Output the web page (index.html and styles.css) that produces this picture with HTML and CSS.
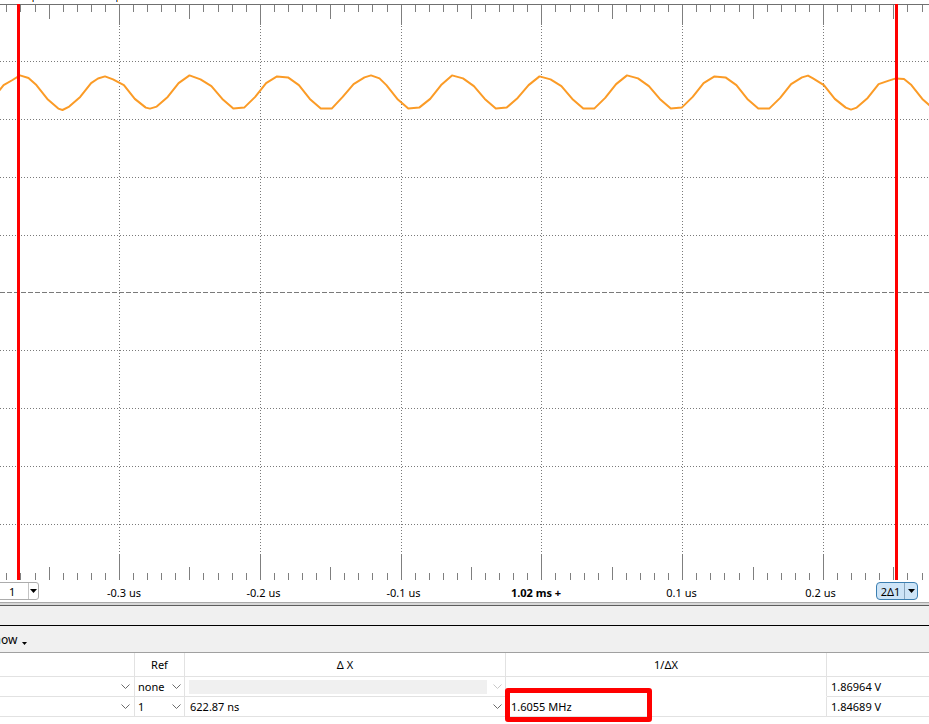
FILE: index.html
```html
<!DOCTYPE html>
<html>
<head>
<meta charset="utf-8">
<title>Scope</title>
<link rel="stylesheet" href="styles.css">
</head>
<body>
<div class="app">
  <div class="scope">
    <svg class="plot" width="929" height="580" viewBox="0 0 929 580" xmlns="http://www.w3.org/2000/svg">
      <rect x="32" y="0" width="1" height="2" fill="#f7a030"/>
      <rect x="33" y="0" width="1" height="2" fill="#3a7bd5"/>
      <rect x="116" y="0" width="1" height="2" fill="#3a7bd5"/>
      <rect x="117" y="0" width="1" height="2" fill="#f7a030"/>
      <rect x="0" y="4" width="929" height="1" fill="#707070"/>
      <g stroke="#7f7f7f" stroke-width="1" fill="none">
        <path d="M6.5 5v7M20.5 5v7M35.5 5v7M63.5 5v7M77.5 5v7M91.5 5v7M105.5 5v7M133.5 5v7M147.5 5v7M161.5 5v7M175.5 5v7M203.5 5v7M218.5 5v7M232.5 5v7M246.5 5v7M274.5 5v7M288.5 5v7M302.5 5v7M316.5 5v7M344.5 5v7M358.5 5v7M372.5 5v7M387.5 5v7M415.5 5v7M429.5 5v7M443.5 5v7M457.5 5v7M485.5 5v7M499.5 5v7M513.5 5v7M527.5 5v7M555.5 5v7M570.5 5v7M584.5 5v7M598.5 5v7M626.5 5v7M640.5 5v7M654.5 5v7M668.5 5v7M696.5 5v7M710.5 5v7M724.5 5v7M739.5 5v7M767.5 5v7M781.5 5v7M795.5 5v7M809.5 5v7M837.5 5v7M851.5 5v7M865.5 5v7M879.5 5v7M907.5 5v7M922.5 5v7"/>
        <path d="M49.5 5v14M189.5 5v14M330.5 5v14M471.5 5v14M612.5 5v14M753.5 5v14M893.5 5v14"/>
        <path d="M119.5 5v20M260.5 5v20M401.5 5v20M541.5 5v20M682.5 5v20M823.5 5v20"/>
        <path d="M6.5 573v7M20.5 573v7M35.5 573v7M63.5 573v7M77.5 573v7M91.5 573v7M105.5 573v7M133.5 573v7M147.5 573v7M161.5 573v7M175.5 573v7M203.5 573v7M218.5 573v7M232.5 573v7M246.5 573v7M274.5 573v7M288.5 573v7M302.5 573v7M316.5 573v7M344.5 573v7M358.5 573v7M372.5 573v7M387.5 573v7M415.5 573v7M429.5 573v7M443.5 573v7M457.5 573v7M485.5 573v7M499.5 573v7M513.5 573v7M527.5 573v7M555.5 573v7M570.5 573v7M584.5 573v7M598.5 573v7M626.5 573v7M640.5 573v7M654.5 573v7M668.5 573v7M696.5 573v7M710.5 573v7M724.5 573v7M739.5 573v7M767.5 573v7M781.5 573v7M795.5 573v7M809.5 573v7M837.5 573v7M851.5 573v7M865.5 573v7M879.5 573v7M907.5 573v7M922.5 573v7"/>
        <path d="M49.5 567v13M189.5 567v13M330.5 567v13M471.5 567v13M612.5 567v13M753.5 567v13M893.5 567v13"/>
        <path d="M119.5 555v25M260.5 555v25M401.5 555v25M541.5 555v25M682.5 555v25M823.5 555v25"/>
      </g>
      <g stroke="#7a7a7a" stroke-width="1" stroke-dasharray="1 2" fill="none">
        <path d="M119.5 26V555M260.5 26V555M401.5 26V555M541.5 26V555M682.5 26V555M823.5 26V555"/>
        <path d="M0 61.5H929M0 119.5H929M0 177.5H929M0 235.5H929M0 350.5H929M0 408.5H929M0 466.5H929M0 524.5H929"/>
      </g>
      <path d="M0 292.5H929" stroke="#7a7a7a" stroke-width="1" stroke-dasharray="5 2" fill="none"/>
      <polyline fill="none" stroke="#fb9b26" stroke-width="2" stroke-linejoin="round"
        points="-7.3,98.9 3.6,85.1 12.5,80 20,75.4 28.5,78 36.4,85.1 47.3,98.9 58.3,108.6 62.5,110 69.2,106.6 80.2,96.9 91.1,83.1 98,78.5 105,76.4 113.0,79.4 123.9,85.1 134.8,98.9 145.8,107.6 150,108.6 156.7,106.6 167.7,96.9 178.6,83.1 189.5,75.4 200.5,79.4 211.4,86.1 222.3,98.9 233.3,108.6 244.2,107.6 255.2,96.9 266.1,83.1 277.0,76.4 288.0,77.4 298.9,85.1 309.8,98.9 320.8,108.6 331.7,108.6 342.7,96.9 353.6,84.1 364.5,77.4 371,75.4 379.5,78.4 386.4,85.1 397.3,98.9 408.3,108.6 419.2,107.6 430.2,98.9 441.1,85.1 452.0,75.4 463.0,78.4 473.9,86.1 484.8,98.9 495.8,108.6 506.7,107.6 517.7,97.9 528.6,85.1 539.5,76.4 550.5,79.4 561.4,86.1 572.3,98.9 583.3,108.6 594.2,108.6 605.2,97.9 616.1,84.1 627.0,75.4 638.0,78.4 648.9,86.1 659.8,98.9 670.8,108.6 681.7,107.6 692.7,96.9 703.6,83.1 714.5,76.4 725.5,77.4 736.4,85.1 747.3,98.9 758.3,108.6 769.2,108.6 780.2,97.9 791.1,84.1 802.0,77.4 808,75.6 813.0,78.4 823.9,85.1 834.8,98.9 845.8,107.6 851,109.6 856.7,107.6 867.7,97.9 878.6,84.1 889.5,80.4 896,78.4 904,79 911.4,85.1 922.3,98.9 933.3,108.6"/>
      <rect x="17" y="4" width="3" height="577" fill="#ff0000"/>
      <rect x="895" y="4" width="3" height="577" fill="#ff0000"/>
    </svg>
  </div>

  <div class="axis">
    <div class="combo">
      <span class="cv">1</span>
      <span class="ca"><svg width="7" height="4" viewBox="0 0 7 4"><polygon points="0,0 7,0 3.5,4" fill="#000"/></svg></span>
    </div>
    <span class="lbl">-0.3 us</span>
    <span class="lbl">-0.2 us</span>
    <span class="lbl">-0.1 us</span>
    <span class="lbl bold">1.02 ms +</span>
    <span class="lbl">0.1 us</span>
    <span class="lbl">0.2 us</span>
    <div class="delta">
      <span class="dv">2Δ1</span>
      <span class="ca"><svg width="7" height="4" viewBox="0 0 7 4"><polygon points="0,0 7,0 3.5,4" fill="#000"/></svg></span>
    </div>
  </div>

  <div class="sep"></div>
  <div class="panel"></div>
  <div class="toolbar">
    <span class="show">Show</span>
    <svg class="caret" width="5" height="3" viewBox="0 0 5 3"><polygon points="0,0 5,0 2.5,3" fill="#000"/></svg>
  </div>

  <div class="meas">
    <div class="th"></div>
    <div class="th">Ref</div>
    <div class="th">Δ X</div>
    <div class="th">1/ΔX</div>
    <div class="th"></div>

    <div class="td dd c1"><span class="v"></span><svg class="chev" width="9" height="5" viewBox="0 0 9 5"><polyline points="0.5,0.5 4.5,4.5 8.5,0.5"/></svg></div>
    <div class="td dd c2"><span class="v">none</span><svg class="chev" width="9" height="5" viewBox="0 0 9 5"><polyline points="0.5,0.5 4.5,4.5 8.5,0.5"/></svg></div>
    <div class="td dd c3 dis"><span class="v off"></span><svg class="chev light" width="9" height="5" viewBox="0 0 9 5"><polyline points="0.5,0.5 4.5,4.5 8.5,0.5"/></svg></div>
    <div class="td c4 nob"></div>
    <div class="td num">1.86964 V</div>

    <div class="td dd c1"><span class="v"></span><svg class="chev" width="9" height="5" viewBox="0 0 9 5"><polyline points="0.5,0.5 4.5,4.5 8.5,0.5"/></svg></div>
    <div class="td dd c2"><span class="v">1</span><svg class="chev" width="9" height="5" viewBox="0 0 9 5"><polyline points="0.5,0.5 4.5,4.5 8.5,0.5"/></svg></div>
    <div class="td dd c3"><span class="v">622.87 ns</span><svg class="chev" width="9" height="5" viewBox="0 0 9 5"><polyline points="0.5,0.5 4.5,4.5 8.5,0.5"/></svg></div>
    <div class="td c4 hl"><span class="hv">1.6055 MHz</span><div class="mark"></div></div>
    <div class="td num">1.84689 V</div>
  </div>
</div>
</body>
</html>
```

FILE: styles.css
```css
* {
  box-sizing: border-box;
  margin: 0;
  padding: 0;
}

html, body {
  width: 929px;
  height: 724px;
  overflow: hidden;
  background: #fff;
}

body {
  font-family: "Noto Sans", "DejaVu Sans", sans-serif;
  font-size: 11px;
  color: #000;
  line-height: 13px;
}

.app {
  width: 929px;
  height: 724px;
  overflow: hidden;
}

.scope {
  height: 580px;
}

.plot {
  display: block;
}

/* time axis row */
.axis {
  height: 22px;
  display: grid;
  grid-template-columns: 54px 140px 139px 141px 124px 167px 111px 1fr;
  align-items: center;
}

.lbl {
  text-align: center;
  white-space: nowrap;
  padding-top: 2px;
}

.bold {
  font-weight: bold;
}

.combo {
  margin-left: -8px;
  width: 47px;
  height: 18px;
  border: 1px solid #acacac;
  border-radius: 3px;
  background: #fff;
  display: flex;
  align-items: center;
}

.cv {
  width: 36px;
  height: 16px;
  padding-left: 16px;
  border-right: 1px solid #c4c4c4;
  display: flex;
  align-items: center;
}

.ca {
  flex: 1;
  display: flex;
  align-items: center;
  justify-content: center;
}

.ca svg {
  display: block;
}

.delta {
  width: 42px;
  height: 18px;
  border: 1px solid #3c7fb1;
  border-radius: 4px;
  background: #cde4f7;
  display: flex;
  align-items: center;
}

.dv {
  width: 28px;
  height: 16px;
  border-right: 1px solid #8aa6bd;
  display: flex;
  align-items: center;
  justify-content: center;
}

/* separators / panels */
.sep {
  height: 4px;
  border-top: 1px solid #a9a9a9;
  border-bottom: 1px solid #5c5c5c;
  background: #d8d8d8;
}

.panel {
  height: 20px;
  background: #f0f0f0;
  border-bottom: 1px solid #000;
}

.toolbar {
  height: 27px;
  background: #f0f0f0;
  border-bottom: 1px solid #a0a0a0;
  display: flex;
  align-items: center;
  padding-top: 2px;
}

.show {
  margin-left: -13px;
  font-size: 12px;
  line-height: 16px;
}

.caret {
  display: block;
  margin-left: 5px;
  margin-top: 6px;
}

/* measurement table */
.meas {
  display: grid;
  grid-template-columns: 135px 50px 321px 321px 223px;
  grid-template-rows: 24px 20px 20px;
  width: 1050px;
}

.th,
.td {
  border-right: 1px solid #e2e2e2;
  border-bottom: 1px solid #e2e2e2;
  white-space: nowrap;
}

.th {
  display: flex;
  align-items: center;
  justify-content: center;
}

.td {
  display: flex;
  align-items: center;
}

.dd {
  justify-content: space-between;
}

.dd .v {
  flex: 1;
}

.c1 {
  padding: 0 4px 0 3px;
}

.c2 {
  padding: 0 3px 0 3px;
}

.c3 {
  padding: 0 3px 0 5px;
}

.c3.dis {
  padding-left: 4px;
}

.v.off {
  height: 14px;
  background: #f0f0f0;
  margin-right: 6px;
}

.chev {
  display: block;
  flex: none;
}

.chev polyline {
  fill: none;
  stroke: #6b6b6b;
  stroke-width: 1;
}

.chev.light polyline {
  stroke: #c8c8c8;
}

.c4.nob {
  border-bottom-color: transparent;
}

.hl {
  position: relative;
  padding-left: 5px;
}

.mark {
  position: absolute;
  left: -1px;
  top: -9px;
  width: 147px;
  height: 34px;
  border: 5px solid #ff0000;
  border-radius: 3px;
}

.num {
  padding-left: 4px;
}
```
